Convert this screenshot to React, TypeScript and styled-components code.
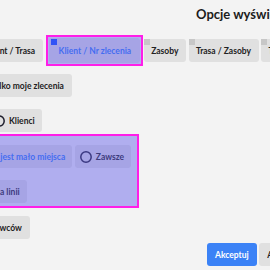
import styled, { createGlobalStyle } from 'styled-components';

const GlobalStyle = createGlobalStyle`
  html, body {
    margin: 0;
    padding: 0;
    background: #f3f3f3;
  }
  body {
    font-family: Lato, 'Noto Sans', sans-serif;
    color: #222;
  }
`;

const Dialog = styled.div`
  width: 270px;
  height: 270px;
  overflow: hidden;
  background: #f3f3f3;
`;

const Title = styled.h2`
  margin: 0;
  padding: 7px 0 0 196px;
  font-size: 13px;
  font-weight: 700;
  line-height: 15px;
  white-space: nowrap;
  color: #1c1c1c;
`;

const Options = styled.div`
  display: flex;
  flex-direction: column;
  gap: 12px;
  margin-top: 17px;
`;

const Row = styled.div<{ $shift: number; $push?: number }>`
  display: flex;
  align-items: center;
  gap: 2.5px;
  height: 23px;
  margin-left: ${(p) => p.$shift}px;
  margin-top: ${(p) => p.$push ?? 0}px;
  white-space: nowrap;
`;

// pink outline + purple tint, like an element picker highlight
const Highlight = styled.div<{ $inset: string; $margin?: string }>`
  position: relative;
  display: inline-flex;
  flex-direction: column;
  gap: 12px;
  align-self: flex-start;
  margin: ${(p) => p.$margin ?? '0'};

  &::after {
    content: '';
    position: absolute;
    inset: ${(p) => p.$inset};
    border: 2px solid #ff1ee8;
    background: rgba(95, 90, 235, 0.45);
    pointer-events: none;
  }
`;

const Button = styled.button<{ $active?: boolean }>`
  display: inline-flex;
  align-items: center;
  gap: 4px;
  height: 23px;
  padding: 0 8px;
  border: none;
  border-radius: 3px;
  background: #e0e0e0;
  color: ${(p) => (p.$active ? '#2f7cf6' : '#222')};
  font-family: inherit;
  font-size: 8.5px;
  font-weight: 700;
  white-space: nowrap;
`;

const Tab = styled(Button)`
  position: relative;
  padding: 0 8px 0 7px;

  &::before {
    content: '';
    position: absolute;
    top: ${(p) => (p.$active ? 1 : 0)}px;
    left: ${(p) => (p.$active ? 2 : 0)}px;
    width: 6px;
    height: 6px;
    background: ${(p) => (p.$active ? '#0b4dff' : '#c7c7c7')};
  }
`;

const SelectedTab = styled(Tab)`
  height: 25px;
  margin: -1px 0;
  padding: 0 9px 0 10px;
`;

const Radio = styled(Button)`
  padding: 0 7px 0 5px;
`;

const FooterRow = styled.div`
  display: flex;
  gap: 2.5px;
  margin: 4px 0 0 207px;
`;

const PrimaryButton = styled(Button)`
  background: #3b82f6;
  color: #fff;
`;

function RadioIcon({ checked }: { checked?: boolean }) {
  return (
    <svg width="12" height="12" viewBox="0 0 12 12">
      <circle cx="6" cy="6" r="5.2" fill="none" stroke={checked ? '#2f7cf6' : '#1d1d2b'} strokeWidth="1.5" />
      {checked && <circle cx="6" cy="6" r="2.6" fill="#2f7cf6" />}
    </svg>
  );
}

export default function App() {
  return (
    <Dialog>
      <GlobalStyle />
      <Title>Opcje wyświetlania</Title>
      <Options>
        <Row $shift={-22}>
          <Tab>Klient / Trasa</Tab>
          <Highlight $inset="-4px -3px" $margin="0 1.5px 0 3px">
            <SelectedTab $active>Klient / Nr zlecenia</SelectedTab>
          </Highlight>
          <Tab>Zasoby</Tab>
          <Tab>Trasa / Zasoby</Tab>
          <Tab>Trasa</Tab>
        </Row>
        <Row $shift={-17.5}>
          <Button>Tylko moje zlecenia</Button>
        </Row>
        <Row $shift={-12}>
          <Radio>
            <RadioIcon />
            Klienci
          </Radio>
        </Row>
        <Highlight $inset="-11px -8px -5px -40px" $margin="1px 0 0 0">
          <Row $shift={-38}>
            <Radio $active>
              <RadioIcon checked />
              Gdy jest mało miejsca
            </Radio>
            <Radio>
              <RadioIcon />
              Zawsze
            </Radio>
          </Row>
          <Row $shift={-27.5}>
            <Radio>
              <RadioIcon />
              Na linii
            </Radio>
          </Row>
        </Highlight>
        <Row $shift={-29} $push={1}>
          <Button>Kierowców</Button>
        </Row>
      </Options>
      <FooterRow>
        <PrimaryButton>Akceptuj</PrimaryButton>
        <Button>Anuluj</Button>
      </FooterRow>
    </Dialog>
  );
}
